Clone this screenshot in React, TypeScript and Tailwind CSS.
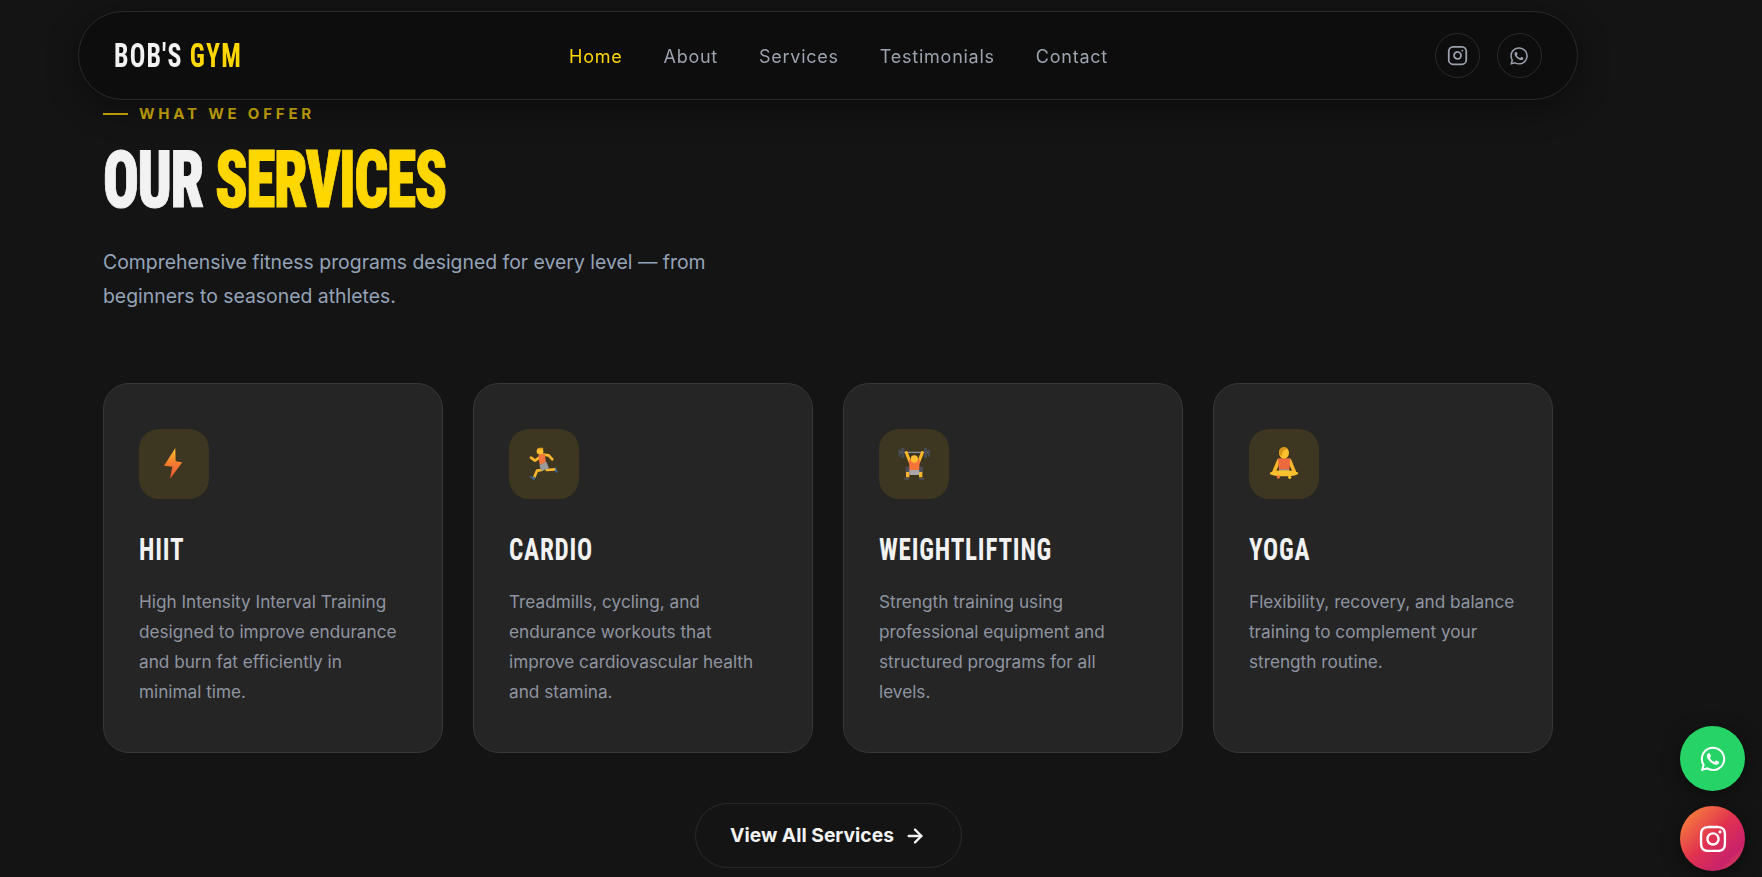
import { Instagram } from 'lucide-react';
import { ArrowRight } from 'lucide-react';
import { FaInstagram, FaWhatsapp } from 'react-icons/fa';

const body = "font-['Inter','Noto_Sans',sans-serif]";
// closest thing to the condensed display face: Roboto narrowed on both axes
const display = "font-['Roboto','Liberation_Sans',sans-serif] [font-stretch:75%] origin-left";

function BoltIcon() {
  return (
    <svg width="36" height="36" viewBox="198 228 108 108">
      <defs>
        <linearGradient id="bolt" x1="0" y1="0" x2="0" y2="1">
          <stop offset="0" stopColor="#fbc02d" />
          <stop offset="0.5" stopColor="#f57c2e" />
          <stop offset="1" stopColor="#e2543a" />
        </linearGradient>
      </defs>
      <path d="M256 234 L222 287 L247 290 L240 327 L277 277 L257 274 Z" fill="url(#bolt)" />
    </svg>
  );
}

function RunnerIcon() {
  return (
    <svg width="36" height="36" viewBox="78 78 108 108" fill="none" strokeLinecap="round" strokeLinejoin="round">
      <path d="M122 110 L105 122 L93 113" stroke="#fbb62c" strokeWidth="8" />
      <path d="M128 104 L146 106 L157 118" stroke="#fbb62c" strokeWidth="8" />
      <path d="M126 150 L111 152 L103 171" stroke="#fbb62c" strokeWidth="8" />
      <path d="M140 150 L164 148" stroke="#fbb62c" strokeWidth="8" />
      <path d="M115 105 L134 102 L138 128 L119 134 Z" fill="#f4743b" />
      <path d="M118 135 L139 125 L147 145 L124 153 Z" fill="#9a9a9a" />
      <circle cx="120" cy="94" r="10" fill="#fbbf2f" />
      <path d="M111 88 Q118 80 130 84 L129 88 Z" fill="#d99a16" />
      <path d="M167 143 L172 157 L167 156 Z" fill="#3f6a9a" stroke="#3f6a9a" strokeWidth="2" />
      <path d="M90 170 L105 172 L103 179 Z" fill="#3f6a9a" stroke="#3f6a9a" strokeWidth="2" />
    </svg>
  );
}

function LifterIcon() {
  return (
    <svg width="36" height="36" viewBox="78 78 108 108" fill="none" strokeLinecap="round" strokeLinejoin="round">
      <path d="M90 97 H175" stroke="#8a8f99" strokeWidth="4" />
      <rect x="85" y="89" width="7" height="21" rx="2" fill="#474c54" />
      <rect x="94" y="83" width="9" height="31" rx="2" fill="#474c54" />
      <rect x="162" y="83" width="9" height="31" rx="2" fill="#474c54" />
      <rect x="173" y="89" width="7" height="21" rx="2" fill="#474c54" />
      <path d="M120 126 L109 98" stroke="#fbb62c" strokeWidth="9" />
      <path d="M146 126 L157 98" stroke="#fbb62c" strokeWidth="9" />
      <rect x="107" y="140" width="14" height="18" rx="3" fill="#4d4f55" />
      <rect x="145" y="140" width="14" height="18" rx="3" fill="#4d4f55" />
      <path d="M113 156 V172" stroke="#fbb62c" strokeWidth="10" strokeLinecap="butt" />
      <path d="M152 156 V172" stroke="#fbb62c" strokeWidth="10" strokeLinecap="butt" />
      <path d="M116 118 H150 L147 151 H119 Z" fill="#f4743b" />
      <rect x="118" y="150" width="30" height="15" rx="2" fill="#a8a8a8" />
      <circle cx="133" cy="117" r="11" fill="#fbbf2f" />
      <rect x="102" y="173" width="16" height="6" rx="2" fill="#4d4f55" />
      <rect x="147" y="173" width="16" height="6" rx="2" fill="#4d4f55" />
    </svg>
  );
}

function YogaIcon() {
  return (
    <svg width="36" height="36" viewBox="78 78 108 108" fill="none" strokeLinecap="round" strokeLinejoin="round">
      <path d="M116 122 L102 156" stroke="#fbb62c" strokeWidth="11" />
      <path d="M149 122 L163 156" stroke="#fbb62c" strokeWidth="11" />
      <path d="M114 115 H151 L148 152 H117 Z" fill="#ee6a3e" />
      <rect x="117" y="148" width="30" height="13" rx="3" fill="#8f8f8f" />
      <ellipse cx="132" cy="99" rx="15" ry="17" fill="#fbc02d" />
      <path d="M117 102 Q114 84 132 81 Q140 81 143 86 Q126 88 125 108 Z" fill="#d9941a" />
      <ellipse cx="132" cy="160" rx="43" ry="9" fill="#fbc02d" />
      <circle cx="115" cy="171" r="5" fill="#f4743b" />
      <circle cx="149" cy="172" r="5" fill="#fbc02d" />
    </svg>
  );
}

const cards = [
  {
    title: 'HIIT',
    icon: <BoltIcon />,
    lines: ['High Intensity Interval Training', 'designed to improve endurance', 'and burn fat efficiently in', 'minimal time.'],
  },
  {
    title: 'CARDIO',
    icon: <RunnerIcon />,
    lines: ['Treadmills, cycling, and', 'endurance workouts that', 'improve cardiovascular health', 'and stamina.'],
  },
  {
    title: 'WEIGHTLIFTING',
    icon: <LifterIcon />,
    lines: ['Strength training using', 'professional equipment and', 'structured programs for all', 'levels.'],
  },
  {
    title: 'YOGA',
    icon: <YogaIcon />,
    lines: ['Flexibility, recovery, and balance', 'training to complement your', 'strength routine.'],
  },
];

const links = ['Home', 'About', 'Services', 'Testimonials', 'Contact'];

export default function App() {
  return (
    <div className={`h-[877px] overflow-hidden bg-[#141414] ${body}`}>
      {/* floating navbar */}
      <nav className="fixed left-[78px] top-[11px] z-10 flex h-[89px] w-[1500px] items-center justify-between rounded-[45px] border border-[#2a2a2a] bg-[#0d0d0d] px-[35px] shadow-[0_8px_32px_rgba(0,0,0,0.4)]">
        <div className={`${display} w-[128px] scale-x-[0.783] whitespace-nowrap text-[33px] font-bold leading-none tracking-[1.5px] text-[#f2f2f2]`}>
          BOB'S <span className="text-[#ffd700]">GYM</span>
        </div>
        <div className="flex items-center gap-[41px] pt-[2px]">
          {links.map((l, i) => (
            <a key={l} className={`text-[18px] tracking-[0.75px] ${i === 0 ? 'text-[#ffd700]' : 'text-[#9ca3af]'}`}>
              {l}
            </a>
          ))}
        </div>
        <div className="flex items-center gap-[17px]">
          <span className="flex h-[45px] w-[45px] items-center justify-center rounded-full border border-[#2a2a2a] text-[#9ca3af]">
            <Instagram size={21} />
          </span>
          <span className="flex h-[45px] w-[45px] items-center justify-center rounded-full border border-[#2a2a2a] text-[#9ca3af]">
            <FaWhatsapp size={20} />
          </span>
        </div>
      </nav>

      <main className="ml-[78px] w-[1500px] px-[25px] pt-[105px]">
        <div className="flex items-center gap-[11px]">
          <span className="h-[2px] w-[25px] bg-[#d1ad08]" />
          <span className="text-[15px] font-bold leading-[18px] tracking-[3.8px] text-[#d1ad08]">WHAT WE OFFER</span>
        </div>
        <h1 className={`${display} mt-[15px] scale-x-[0.755] text-[79px] font-black leading-[84px] tracking-[-2px] text-[#f2f2f2] [-webkit-text-stroke:1px_currentColor]`}>
          OUR <span className="text-[#ffd700]">SERVICES</span>
        </h1>
        <p className="mt-[23px] text-[19.4px] leading-[34px] text-[#94a3b8]">
          Comprehensive fitness programs designed for every level — from
          <br />
          beginners to seasoned athletes.
        </p>

        <div className="mt-[70px] grid grid-cols-4 gap-[30px]">
          {cards.map((c) => (
            <div key={c.title} className="h-[370px] rounded-[26px] border border-[#383838] bg-[#252525] px-[35px] pt-[45px]">
              <div className="flex h-[70px] w-[70px] items-center justify-center rounded-[20px] bg-[#3d3620]">{c.icon}</div>
              <h3 className={`${display} mt-[30px] scale-x-[0.785] text-[32px] font-bold leading-[40px] tracking-[1px] text-[#f2f2f2]`}>{c.title}</h3>
              <p className="mt-[18px] text-[17.2px] leading-[30px] text-[#8f94a0]">
                {c.lines.map((line) => (
                  <span key={line} className="block whitespace-nowrap">
                    {line}
                  </span>
                ))}
              </p>
            </div>
          ))}
        </div>

        <div className="mt-[50px] flex justify-center">
          <a className="flex h-[65px] w-[267px] items-center justify-center gap-[10px] rounded-full border border-[#2a2a2a] text-[19.3px] font-bold text-[#f2f2f2]">
            View All Services
            <ArrowRight size={22} strokeWidth={2.5} />
          </a>
        </div>
      </main>

      {/* floating contact buttons */}
      <div className="fixed bottom-[6px] right-[17px] flex flex-col gap-[15px]">
        <span className="flex h-[65px] w-[65px] items-center justify-center rounded-full bg-[#25d366] text-white shadow-[0_4px_20px_rgba(0,0,0,0.4)]">
          <FaWhatsapp size={28} />
        </span>
        <span className="flex h-[65px] w-[65px] items-center justify-center rounded-full bg-[linear-gradient(135deg,#f7823a_8%,#e1324f_48%,#c9226c_78%,#e0563f_97%)] text-white shadow-[0_4px_20px_rgba(0,0,0,0.4)]">
          <FaInstagram size={30} />
        </span>
      </div>
    </div>
  );
}
